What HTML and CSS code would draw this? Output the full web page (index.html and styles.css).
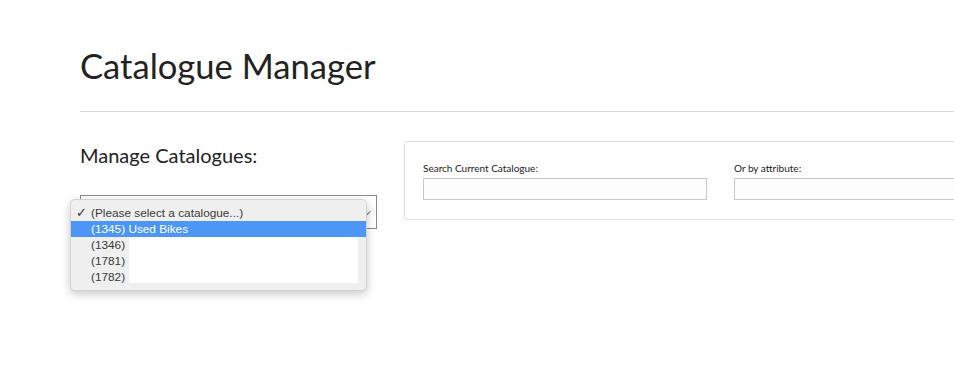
FILE: index.html
```html
<!DOCTYPE html>
<html>
<head>
    <title>Catalogue Manager</title>
    <meta charset="utf-8">
    <link rel="stylesheet" href="styles.css">
</head>
<body>
<div class="page">
    <h1 class="page-title">Catalogue Manager</h1>
    <div class="content">
        <div class="manage">
            <h2 class="manage-title">Manage Catalogues:</h2>
            <div class="select-wrap">
                <div class="select"><span class="select-arrow"></span></div>
                <div class="menu">
                    <div class="menu-item checked"><span class="check">&#10003;</span>(Please select a catalogue...)</div>
                    <div class="menu-item active">(1345) Used Bikes</div>
                    <div class="menu-item">(1346) </div>
                    <div class="menu-item">(1781) F</div>
                    <div class="menu-item">(1782) I</div>
                    <div class="redact"></div>
                </div>
            </div>
        </div>
        <div class="search-panel">
            <div class="field">
                <label class="field-label">Search Current Catalogue:</label>
                <div class="field-input"></div>
            </div>
            <div class="field">
                <label class="field-label">Or by attribute:</label>
                <div class="field-input"></div>
            </div>
        </div>
    </div>
</div>
</body>
</html>
```

FILE: styles.css
```css
html {
    overflow: hidden;
}

body {
    margin: 0;
    min-height: 370px;
    background: #fff;
    font-family: Lato, "Open Sans", sans-serif;
    color: #222;
}

.page {
    padding: 44px 0 0 80px;
    width: 1200px;
    min-height: 326px;
}

.page-title {
    margin: 0;
    font-size: 34.6px;
    line-height: 44px;
    font-weight: 400;
    padding-bottom: 23px;
    border-bottom: 1px solid #dcdcdc;
}

.content {
    display: flex;
    align-items: flex-start;
    margin-top: 29px;
}

.manage {
    width: 324px;
    flex-shrink: 0;
}

.manage-title {
    margin: 2px 0 0;
    font-size: 20px;
    line-height: 24px;
    font-weight: 400;
}

.select-wrap {
    position: relative;
    margin-top: 28px;
    width: 297px;
}

.select {
    position: relative;
    height: 32px;
    border: 1px solid #8a8a8a;
    background: #fff;
}

.select-arrow {
    position: absolute;
    right: 6px;
    top: 13px;
    width: 4px;
    height: 4px;
    border-right: 1px solid #777;
    border-bottom: 1px solid #777;
    transform: rotate(45deg);
}

/* open native dropdown list, drawn over the select */
.menu {
    position: absolute;
    left: -10px;
    top: 4px;
    width: 297px;
    padding: 5px 0;
    box-sizing: border-box;
    background: #efefef;
    border: 1px solid rgba(0, 0, 0, 0.12);
    border-radius: 5px;
    box-shadow: 0 3px 10px rgba(0, 0, 0, 0.22);
    font-family: "Liberation Sans", Arial, sans-serif;
    font-size: 11.8px;
    color: #3a3a3a;
    z-index: 5;
}

.menu-item {
    position: relative;
    height: 16px;
    line-height: 16px;
    padding-left: 20px;
    white-space: nowrap;
}

.menu-item .check {
    position: absolute;
    left: 5px;
    top: 0;
    font-family: "DejaVu Sans", sans-serif;
    font-size: 13px;
    color: #333;
}

.menu-item.active {
    background: #4c97f6;
    color: #fff;
}

.redact {
    position: absolute;
    left: 58px;
    top: 37px;
    width: 229px;
    height: 46px;
    background: #fff;
}

.search-panel {
    display: flex;
    gap: 27px;
    width: 620px;
    padding: 20px 18px 19px;
    border: 1px solid #dedede;
    border-radius: 3px;
}

.field {
    display: flex;
    flex-direction: column;
    gap: 4px;
}

.field-label {
    font-size: 10px;
    line-height: 12px;
    color: #222;
}

.field-input {
    width: 282px;
    height: 20px;
    border: 1px solid #c9c9c9;
    background: #fdfdfd;
}
```
